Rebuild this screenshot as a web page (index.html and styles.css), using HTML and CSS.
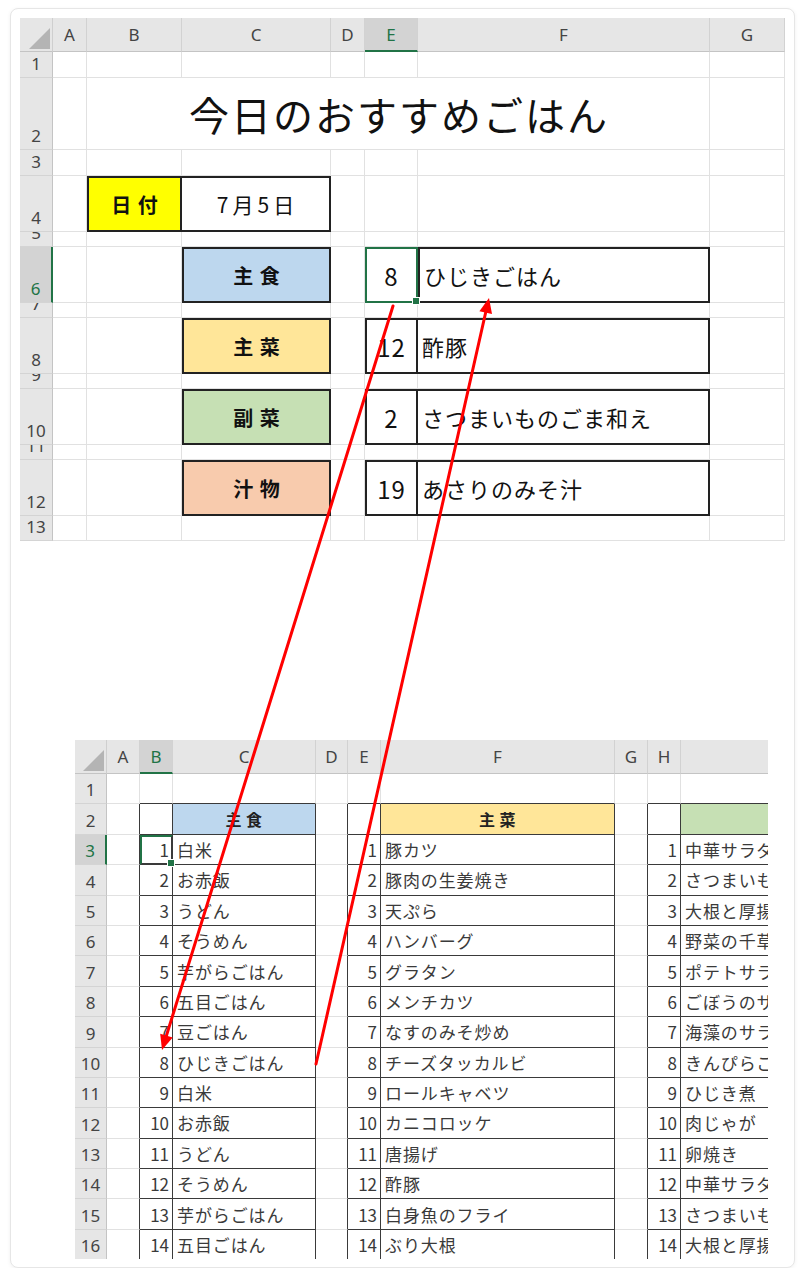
FILE: index.html
```html
<!DOCTYPE html>
<html lang="ja">
<head>
<meta charset="utf-8">
<title>今日のおすすめごはん</title>
<link rel="stylesheet" href="styles.css">
</head>
<body>
<div class="card">
  <div class="sheet top">
    <div class="r hdr">
      <div class="c corner"><svg width="21" height="21" viewBox="0 0 21 21"><polygon points="21,0 21,21 0,21" fill="#b4b4b4"/></svg></div>
      <div class="c ch">A</div><div class="c ch">B</div><div class="c ch">C</div><div class="c ch">D</div>
      <div class="c ch sel">E</div><div class="c ch">F</div><div class="c ch">G</div>
    </div>
    <div class="r h26"><div class="c rh">1</div><div class="c"></div><div class="c"></div><div class="c"></div><div class="c"></div><div class="c"></div><div class="c"></div><div class="c"></div></div>
    <div class="r h72"><div class="c rh">2</div><div class="c"></div><div class="c title">今日のおすすめごはん</div><div class="c"></div></div>
    <div class="r h26"><div class="c rh">3</div><div class="c"></div><div class="c"></div><div class="c"></div><div class="c"></div><div class="c"></div><div class="c"></div><div class="c"></div></div>
    <div class="r h56"><div class="c rh">4</div><div class="c"></div><div class="c bx lab yel">日 付</div><div class="c bx nl date">7月5日</div><div class="c"></div><div class="c"></div><div class="c"></div><div class="c"></div></div>
    <div class="r h15"><div class="c rh">5</div><div class="c"></div><div class="c"></div><div class="c"></div><div class="c"></div><div class="c"></div><div class="c"></div><div class="c"></div></div>
    <div class="r h56"><div class="c rh sel">6</div><div class="c"></div><div class="c"></div><div class="c bx lab blu">主 食</div><div class="c"></div><div class="c num selc">8</div><div class="c bx txt">ひじきごはん</div><div class="c"></div></div>
    <div class="r h15"><div class="c rh">7</div><div class="c"></div><div class="c"></div><div class="c"></div><div class="c"></div><div class="c"></div><div class="c"></div><div class="c"></div></div>
    <div class="r h56"><div class="c rh">8</div><div class="c"></div><div class="c"></div><div class="c bx lab ylw">主 菜</div><div class="c"></div><div class="c bx num">12</div><div class="c bx nl txt">酢豚</div><div class="c"></div></div>
    <div class="r h15"><div class="c rh">9</div><div class="c"></div><div class="c"></div><div class="c"></div><div class="c"></div><div class="c"></div><div class="c"></div><div class="c"></div></div>
    <div class="r h56"><div class="c rh">10</div><div class="c"></div><div class="c"></div><div class="c bx lab grn">副 菜</div><div class="c"></div><div class="c bx num">2</div><div class="c bx nl txt">さつまいものごま和え</div><div class="c"></div></div>
    <div class="r h15"><div class="c rh">11</div><div class="c"></div><div class="c"></div><div class="c"></div><div class="c"></div><div class="c"></div><div class="c"></div><div class="c"></div></div>
    <div class="r h56"><div class="c rh">12</div><div class="c"></div><div class="c"></div><div class="c bx lab org">汁 物</div><div class="c"></div><div class="c bx num">19</div><div class="c bx nl txt">あさりのみそ汁</div><div class="c"></div></div>
    <div class="r h25"><div class="c rh">13</div><div class="c"></div><div class="c"></div><div class="c"></div><div class="c"></div><div class="c"></div><div class="c"></div><div class="c"></div></div>
  </div>

  <div class="sheet bot">
    <div class="r hdr">
      <div class="c corner"><svg width="21" height="21" viewBox="0 0 21 21"><polygon points="21,0 21,21 0,21" fill="#b4b4b4"/></svg></div>
      <div class="c ch">A</div><div class="c ch sel">B</div><div class="c ch">C</div><div class="c ch">D</div><div class="c ch">E</div><div class="c ch">F</div><div class="c ch">G</div><div class="c ch">H</div><div class="c ch"></div>
    </div>
    <div class="r h30"><div class="c rh">1</div><div class="c"></div><div class="c ub"></div><div class="c ub"></div><div class="c"></div><div class="c ub"></div><div class="c ub"></div><div class="c"></div><div class="c ub"></div><div class="c ub"></div></div>
    <div class="r h30"><div class="c rh">2</div><div class="c lb"></div><div class="c tb"></div><div class="c tb hh blu">主 食</div><div class="c lb"></div><div class="c tb"></div><div class="c tb hh ylw">主 菜</div><div class="c lb"></div><div class="c tb"></div><div class="c tb hh grn">副 菜</div></div>
    <div class="r h30"><div class="c rh sel">3</div><div class="c lb"></div><div class="c tb n selc">1</div><div class="c tb t">白米</div><div class="c lb"></div><div class="c tb n">1</div><div class="c tb t">豚カツ</div><div class="c lb"></div><div class="c tb n">1</div><div class="c tb t">中華サラダ</div></div>
    <div class="r h30"><div class="c rh">4</div><div class="c lb"></div><div class="c tb n">2</div><div class="c tb t">お赤飯</div><div class="c lb"></div><div class="c tb n">2</div><div class="c tb t">豚肉の生姜焼き</div><div class="c lb"></div><div class="c tb n">2</div><div class="c tb t">さつまいものごま和え</div></div>
    <div class="r h30"><div class="c rh">5</div><div class="c lb"></div><div class="c tb n">3</div><div class="c tb t">うどん</div><div class="c lb"></div><div class="c tb n">3</div><div class="c tb t">天ぷら</div><div class="c lb"></div><div class="c tb n">3</div><div class="c tb t">大根と厚揚げの煮物</div></div>
    <div class="r h30"><div class="c rh">6</div><div class="c lb"></div><div class="c tb n">4</div><div class="c tb t">そうめん</div><div class="c lb"></div><div class="c tb n">4</div><div class="c tb t">ハンバーグ</div><div class="c lb"></div><div class="c tb n">4</div><div class="c tb t">野菜の千草焼き</div></div>
    <div class="r h30"><div class="c rh">7</div><div class="c lb"></div><div class="c tb n">5</div><div class="c tb t">芋がらごはん</div><div class="c lb"></div><div class="c tb n">5</div><div class="c tb t">グラタン</div><div class="c lb"></div><div class="c tb n">5</div><div class="c tb t">ポテトサラダ</div></div>
    <div class="r h30"><div class="c rh">8</div><div class="c lb"></div><div class="c tb n">6</div><div class="c tb t">五目ごはん</div><div class="c lb"></div><div class="c tb n">6</div><div class="c tb t">メンチカツ</div><div class="c lb"></div><div class="c tb n">6</div><div class="c tb t">ごぼうのサラダ</div></div>
    <div class="r h30"><div class="c rh">9</div><div class="c lb"></div><div class="c tb n">7</div><div class="c tb t">豆ごはん</div><div class="c lb"></div><div class="c tb n">7</div><div class="c tb t">なすのみそ炒め</div><div class="c lb"></div><div class="c tb n">7</div><div class="c tb t">海藻のサラダ</div></div>
    <div class="r h30"><div class="c rh">10</div><div class="c lb"></div><div class="c tb n">8</div><div class="c tb t">ひじきごはん</div><div class="c lb"></div><div class="c tb n">8</div><div class="c tb t">チーズタッカルビ</div><div class="c lb"></div><div class="c tb n">8</div><div class="c tb t">きんぴらごぼう</div></div>
    <div class="r h30"><div class="c rh">11</div><div class="c lb"></div><div class="c tb n">9</div><div class="c tb t">白米</div><div class="c lb"></div><div class="c tb n">9</div><div class="c tb t">ロールキャベツ</div><div class="c lb"></div><div class="c tb n">9</div><div class="c tb t">ひじき煮</div></div>
    <div class="r h30"><div class="c rh">12</div><div class="c lb"></div><div class="c tb n">10</div><div class="c tb t">お赤飯</div><div class="c lb"></div><div class="c tb n">10</div><div class="c tb t">カニコロッケ</div><div class="c lb"></div><div class="c tb n">10</div><div class="c tb t">肉じゃが</div></div>
    <div class="r h30"><div class="c rh">13</div><div class="c lb"></div><div class="c tb n">11</div><div class="c tb t">うどん</div><div class="c lb"></div><div class="c tb n">11</div><div class="c tb t">唐揚げ</div><div class="c lb"></div><div class="c tb n">11</div><div class="c tb t">卵焼き</div></div>
    <div class="r h30"><div class="c rh">14</div><div class="c lb"></div><div class="c tb n">12</div><div class="c tb t">そうめん</div><div class="c lb"></div><div class="c tb n">12</div><div class="c tb t">酢豚</div><div class="c lb"></div><div class="c tb n">12</div><div class="c tb t">中華サラダ</div></div>
    <div class="r h30"><div class="c rh">15</div><div class="c lb"></div><div class="c tb n">13</div><div class="c tb t">芋がらごはん</div><div class="c lb"></div><div class="c tb n">13</div><div class="c tb t">白身魚のフライ</div><div class="c lb"></div><div class="c tb n">13</div><div class="c tb t">さつまいものごま和え</div></div>
    <div class="r h30"><div class="c rh">16</div><div class="c lb"></div><div class="c tb n">14</div><div class="c tb t">五目ごはん</div><div class="c lb"></div><div class="c tb n">14</div><div class="c tb t">ぶり大根</div><div class="c lb"></div><div class="c tb n">14</div><div class="c tb t">大根と厚揚げの煮物</div></div>
  </div>
</div>

<svg class="arrows" width="805" height="1280" viewBox="0 0 805 1280">
  <line x1="393" y1="306" x2="166" y2="1037" stroke="#ff0000" stroke-width="3" stroke-linecap="round"/>
  <polygon points="162,1050 172.7,1037.6 160.2,1033.7" fill="#ff0000"/>
  <line x1="316" y1="1064" x2="486" y2="311" stroke="#ff0000" stroke-width="3" stroke-linecap="round"/>
  <polygon points="489,298 492,314.1 479.4,311.2" fill="#ff0000"/>
</svg>
</body>
</html>
```

FILE: styles.css
```css
* { box-sizing: border-box; }

body {
  margin: 0;
  background: #ffffff;
  font-family: "Noto Sans", "Noto Sans CJK JP", sans-serif;
}

.card {
  margin: 8px 0 0 10px;
  width: 785px;
  height: 1260px;
  border: 1px solid #e6e6e6;
  border-radius: 8px;
  background: #ffffff;
  box-shadow: 0 1px 4px rgba(0, 0, 0, 0.06);
  padding: 9px 0 0 9px;
}

.sheet { overflow: hidden; }

.top { width: 765px; height: 523px; }
.bot { width: 693px; height: 519px; margin: 199px 0 0 55px; }

.r { display: grid; }
.top .r { grid-template-columns: 33px 34px 95px 149px 34px 53px 292px 75px; }
.bot .r { grid-template-columns: 32px 33px 33px 143px 32px 33px 234px 33px 33px 234px; width: 840px; }

.hdr { height: 34px; }
.h26 { height: 26px; }
.h25 { height: 25px; }
.h72 { height: 72px; }
.h56 { height: 56px; }
.h15 { height: 15px; }
.h30 { height: 30.4px; }

.c {
  border-right: 1px solid #e1e1e1;
  border-bottom: 1px solid #e1e1e1;
  overflow: hidden;
  display: flex;
  align-items: center;
  min-width: 0;
}

.corner {
  background: #e6e6e6;
  border-right-color: #cfcfcf;
  border-bottom-color: #c4c4c4;
  justify-content: flex-end;
  align-items: flex-end;
  padding: 0 2px 2px 0;
}
.corner svg { display: block; }

.ch {
  background: #e6e6e6;
  border-right-color: #d2d2d2;
  border-bottom-color: #c4c4c4;
  justify-content: center;
  color: #444444;
  font-size: 17px;
}
.ch.sel {
  background: #d3d3d3;
  color: #217346;
  border-bottom: 2px solid #217346;
}

.rh {
  background: #e6e6e6;
  border-right-color: #c4c4c4;
  border-bottom-color: #d4d4d4;
  justify-content: center;
  align-items: flex-end;
  line-height: 26px;
  font-size: 17px;
  color: #444444;
}
.rh.sel {
  background: #d3d3d3;
  color: #217346;
  border-right: 2px solid #217346;
}

/* top sheet content */
.top .c:not(.ch):not(.rh):not(.corner) {
  font-family: "Noto Sans CJK JP", sans-serif;
  color: #111111;
}

.title {
  grid-column: span 5;
  justify-content: center;
  align-items: flex-end;
  font-size: 40px;
  line-height: 40px;
  letter-spacing: 2px;
  padding: 0 0 15px 2px;
  border-right-color: #e1e1e1;
}

.bx { border: 2px solid #222222; }
.bx.nl { border-left: 0; }

.lab {
  justify-content: center;
  font-size: 20px;
  font-weight: bold;
  letter-spacing: 1px;
  padding-left: 1px;
}
.date {
  justify-content: center;
  font-size: 21px;
  letter-spacing: 4px;
  padding-left: 4px;
}
.num {
  justify-content: center;
  font-size: 24px;
  letter-spacing: 1px;
}
.txt {
  padding-left: 4px;
  font-size: 22px;
  letter-spacing: 1px;
  white-space: nowrap;
}

.yel { background: #ffff00; }
.blu { background: #bdd7ee; }
.ylw { background: #ffe699; }
.grn { background: #c6e0b4; }
.org { background: #f8cbad; }

.selc {
  border: 2px solid #217346;
  overflow: visible;
  position: relative;
  z-index: 2;
}
.selc::after {
  content: "";
  position: absolute;
  right: -4px;
  bottom: -4px;
  width: 6px;
  height: 6px;
  background: #217346;
  border: 1px solid #ffffff;
}

/* bottom sheet content */
.ub { border-bottom-color: #3a3a3a; }
.lb { border-right-color: #3a3a3a; }
.tb { border-right-color: #3a3a3a; border-bottom-color: #3a3a3a; }

.bot .n, .bot .t, .bot .hh {
  font-family: "Noto Sans CJK JP", sans-serif;
  color: #3a3a3a;
}
.n {
  justify-content: flex-end;
  padding-right: 3px;
  font-size: 17px;
}
.bot .n.selc { padding-right: 2px; }
.t {
  padding-left: 4px;
  font-size: 17px;
  letter-spacing: 0.9px;
  white-space: nowrap;
}
.hh {
  justify-content: center;
  font-size: 16px;
  font-weight: bold;
  letter-spacing: 0.5px;
}
.bot .hh { color: #222222; }

.arrows {
  position: absolute;
  top: 0;
  left: 0;
  pointer-events: none;
}
```
